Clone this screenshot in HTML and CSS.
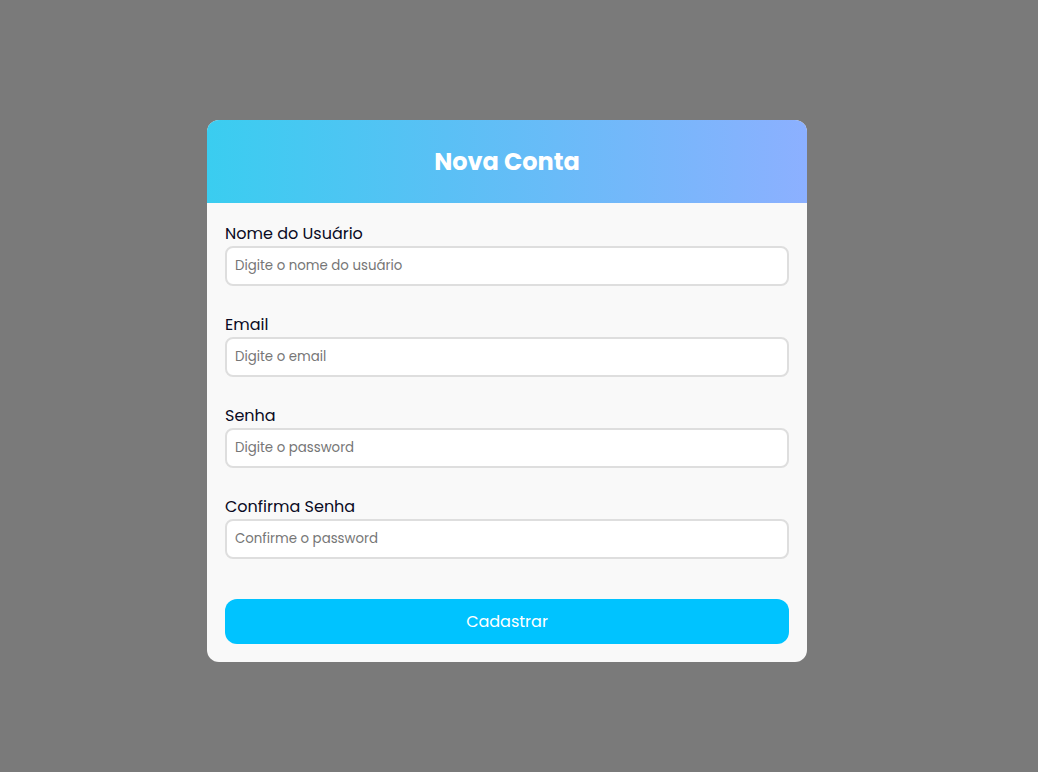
FILE: index.html
```html
<!DOCTYPE html>
<html lang="pt-BR">
<head>
<meta charset="utf-8">
<title>Nova Conta</title>
<link rel="stylesheet" href="styles.css">
</head>
<body>
<main class="page">
  <form class="card">
    <header class="card-header">
      <h1 class="card-title">Nova Conta</h1>
    </header>
    <div class="card-body">
      <div class="field">
        <label class="field-label" for="user">Nome do Usuário</label>
        <input class="field-input" id="user" type="text" placeholder="Digite o nome do usuário">
      </div>
      <div class="field">
        <label class="field-label" for="email">Email</label>
        <input class="field-input" id="email" type="text" placeholder="Digite o email">
      </div>
      <div class="field">
        <label class="field-label" for="pass">Senha</label>
        <input class="field-input" id="pass" type="password" placeholder="Digite o password">
      </div>
      <div class="field">
        <label class="field-label" for="pass2">Confirma Senha</label>
        <input class="field-input" id="pass2" type="password" placeholder="Confirme o password">
      </div>
      <button class="submit" type="button">Cadastrar</button>
    </div>
  </form>
</main>
</body>
</html>
```
FILE: styles.css
```css
* { box-sizing: border-box; }
html, body { margin: 0; height: 100%; }
body {
  background: #7a7a7a;
  font-family: Poppins, "DejaVu Sans", sans-serif;
}
.page {
  display: flex;
  justify-content: center;
  padding-top: 120px;
  padding-right: 24px;
}
.card {
  width: 600px;
  background: #f9f9f9;
  border-radius: 12px;
  overflow: hidden;
}
.card-header {
  height: 83px;
  display: flex;
  align-items: center;
  justify-content: center;
  background: linear-gradient(90deg, #3acdf0 0%, #5ac0f5 40%, #8cb0ff 100%);
}
.card-title {
  margin: 0;
  color: #fff;
  font-size: 24px;
  font-weight: 700;
}
.card-body {
  padding: 19px 18px 18px;
  display: flex;
  flex-direction: column;
}
.field {
  display: flex;
  flex-direction: column;
  margin-bottom: 27px;
}
.field-label {
  font-size: 16px;
  line-height: 24px;
  font-weight: 400;
  color: #0a0a23;
}
.field-input {
  height: 40px;
  border: 2px solid #dedede;
  border-radius: 8px;
  background: #fff;
  padding: 0 8px;
  font-family: inherit;
  font-size: 13.33px;
  color: #333;
  outline: none;
}
.field-input::placeholder { color: #767676; }
.submit {
  margin-top: 13px;
  height: 45px;
  border: 0;
  border-radius: 12px;
  background: #00c3ff;
  color: #fff;
  font-family: inherit;
  font-size: 16px;
  cursor: pointer;
}
```
